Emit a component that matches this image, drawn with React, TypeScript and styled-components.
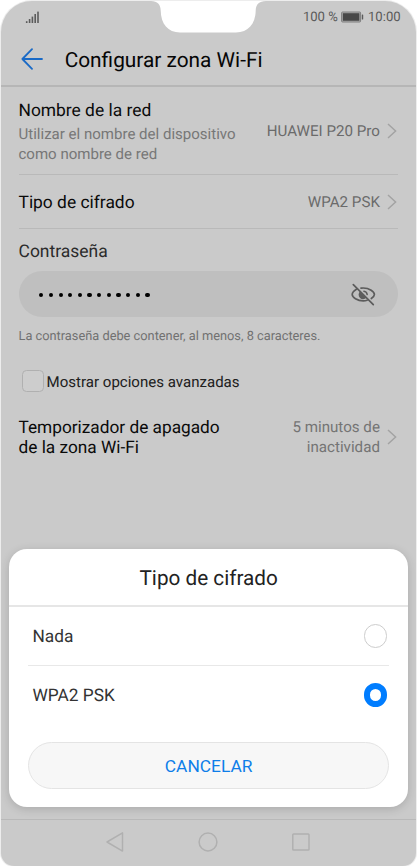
import React, { useState } from "react";
import styled, { createGlobalStyle } from "styled-components";

const GlobalStyle = createGlobalStyle`
  * { box-sizing: border-box; }
  body {
    margin: 0;
    background: #fff;
    font-family: Roboto, sans-serif;
    text-rendering: geometricPrecision;
  }
  button { font-family: inherit; cursor: pointer; }
  svg { display: block; flex: none; }
`;

const Frame = styled.div`
  display: flow-root;
  height: 866px;
  overflow: hidden;
`;

const Phone = styled.div`
  position: relative;
  display: flex;
  flex-direction: column;
  width: 415px;
  height: 865px;
  margin: 1px 1px 0;
  background: #cacaca;
  border-radius: 31px 31px 13px 13px;
  box-shadow: 0 0 0 1px #ededed;
  overflow: hidden;
`;

const Notch = styled.svg`
  position: absolute;
  top: -1px;
  left: 150px;
`;

const StatusBar = styled.div`
  display: flex;
  align-items: center;
  justify-content: space-between;
  height: 32px;
  padding: 0 15.4px 0 24px;
  font-size: 13.1px;
  color: #5a5a5a;
`;

const StatusGroup = styled.div`
  display: flex;
  align-items: center;
  gap: 3.6px;
  white-space: nowrap;
`;

const Header = styled.header`
  display: flex;
  align-items: center;
  height: 54px;
  padding-left: 20px;
  border-bottom: 2px solid #b6b6b6;
`;

const Title = styled.h1`
  margin: 0 0 0 21.7px;
  padding-top: 3px;
  font-size: 20.84px;
  line-height: 24px;
  font-weight: 400;
  color: #060606;
`;

const BackButton = styled.button`
  padding: 0;
  border: 0;
  background: none;
`;

const Content = styled.main`
  flex: 1;
  padding: 0 17.7px 0 17.5px;
`;

const Row = styled.div<{ $height: number; $line?: boolean }>`
  display: flex;
  align-items: center;
  height: ${(p) => p.$height}px;
  padding-right: 1.4px;
  border-bottom: ${(p) => (p.$line ? "1px solid #b9b9b9" : "0")};
`;

const RowText = styled.div`
  flex: 1;
  padding-top: 2px;
  white-space: nowrap;
`;

const Label = styled.div<{ $compact?: boolean }>`
  font-size: ${(p) => (p.$compact ? 17.25 : 17.4)}px;
  line-height: ${(p) => (p.$compact ? 20.3 : 24)}px;
  color: #0a0a0a;
`;

const Sub = styled.div`
  margin-top: 0.6px;
  font-size: 15.04px;
  line-height: 20px;
  color: #777;
`;

const Value = styled.div<{ $soft?: boolean }>`
  padding-top: ${(p) => (p.$soft ? 0 : 1.6)}px;
  margin-right: 7px;
  font-size: 15.15px;
  line-height: 20px;
  text-align: right;
  white-space: nowrap;
  color: ${(p) => (p.$soft ? "#747474" : "#6b6b6b")};
`;

const FieldLabel = styled.div`
  margin: 11px 0 7px;
  font-size: 17.49px;
  line-height: 24px;
  color: #2b2b2b;
`;

const Field = styled.div`
  display: flex;
  align-items: center;
  justify-content: space-between;
  height: 46px;
  padding: 0 22px 0 20.7px;
  border-radius: 23px;
  background: #bfbfbf;
`;

const Dots = styled.div`
  display: flex;
  gap: 5.47px;
  padding-top: 2px;
`;

const Dot = styled.span`
  width: 4.2px;
  height: 4.2px;
  border-radius: 50%;
  background: #000;
`;

const Hint = styled.div`
  margin-top: 12px;
  font-size: 12.81px;
  line-height: 16px;
  color: #717171;
`;

const CheckRow = styled.label`
  display: flex;
  align-items: center;
  gap: 2.5px;
  height: 22px;
  margin: 25px 0 25px 3.2px;
  font-size: 15.06px;
  color: #202020;
`;

const Box = styled.span`
  width: 22.4px;
  height: 22px;
  border: 1.4px solid #b0b0b0;
  border-radius: 4.5px;
  background: #cdcdcd;
`;

const CheckText = styled.span`
  padding-top: 1px;
`;

const NavBar = styled.nav`
  display: flex;
  align-items: center;
  justify-content: center;
  gap: 73px;
  height: 47px;
  padding: 0 2px 2px 0;
  border-top: 1px solid #b9b9b9;
`;

const Dialog = styled.section`
  position: absolute;
  left: 8.3px;
  right: 8px;
  bottom: 59px;
  height: 258.3px;
  background: #fff;
  border-radius: 18px;
  box-shadow: 0 2px 10px rgba(0, 0, 0, 0.16);
`;

const DialogTitle = styled.h2`
  margin: 0;
  padding-top: 2px;
  height: 58.3px;
  border-bottom: 2px solid #e6e6e6;
  font-size: 20.72px;
  line-height: 56px;
  font-weight: 400;
  text-align: center;
  color: #222;
`;

const Option = styled.div<{ $line?: boolean }>`
  display: flex;
  align-items: center;
  justify-content: space-between;
  height: ${(p) => (p.$line ? 59 : 58)}px;
  margin: 0 18.7px;
  padding: 0 2px 0 4.5px;
  border-bottom: ${(p) => (p.$line ? "1px solid #e8e8e8" : "0")};
  font-size: 17.3px;
  color: #333;
`;

const OptionText = styled.span`
  padding-top: 2px;
`;

const Radio = styled.span<{ $on: boolean }>`
  width: 23.4px;
  height: 23.4px;
  border-radius: 50%;
  border: ${(p) => (p.$on ? "6px solid #007dff" : "1px solid #cdcdcd")};
  background: #fff;
`;

const CancelButton = styled.button`
  display: block;
  width: calc(100% - 37.4px);
  height: 47px;
  margin: 18px 18.7px 0;
  padding: 0;
  border: 1px solid #e4e4e4;
  border-radius: 24px;
  background: #f7f7f7;
  color: #0d7ee9;
  font-size: 17.35px;
`;

const Chevron = () => (
  <svg width="10" height="16" viewBox="0 0 10 16" fill="none" stroke="#a3a3a3" strokeWidth="1.5">
    <path d="M1 1 8.6 8 1 15" />
  </svg>
);

const SignalIcon = () => (
  <svg width="14" height="13" viewBox="0 0 14 13" fill="#5c5c5c">
    <rect x="0.9" y="10.2" width="1.6" height="1.8" />
    <rect x="3.8" y="8" width="1.6" height="4" />
    <rect x="6.6" y="5.6" width="1.6" height="6.4" />
    <rect x="9.4" y="3" width="1.6" height="9" />
    <rect x="12.2" y="0.6" width="1.6" height="11.4" />
  </svg>
);

const BatteryIcon = () => (
  <svg width="23" height="12" viewBox="0 0 23 12">
    <rect x="0.6" y="1" width="19" height="10" rx="1" fill="#b0b0b0" stroke="#777" strokeWidth="0.9" />
    <rect x="1.8" y="2.2" width="16.6" height="7.6" fill="#484848" />
    <rect x="20.8" y="3.5" width="1.4" height="5" rx="0.5" fill="#5c5c5c" />
  </svg>
);

const BackIcon = () => (
  <svg width="22" height="22" viewBox="0 0 22 22" fill="none" stroke="#1a6ac6" strokeWidth="1.8" strokeLinecap="round" strokeLinejoin="round">
    <path d="M11 1.2 1.4 11 11 20.8M1.4 11H21" />
  </svg>
);

const EyeOffIcon = () => (
  <svg width="25" height="23" viewBox="0 0 25 23" fill="none" stroke="#5c5c5c" strokeWidth="1.7" strokeLinecap="round">
    <path d="M5.4 6.2C3 7.7 1.2 9.8 1.2 11.5 1.2 14.1 6.2 17.9 12.3 17.9 13.6 17.9 14.9 17.7 16.1 17.3" />
    <path d="M10 5.2C10.8 5.1 11.5 5 12.3 5 18.4 5 23.4 8.900 23.4 11.5 23.4 12.7 22.2 14.2 20.3 15.5" />
    <path d="M8.9 8.5A4.5 4.5 0 1 0 15.4 14.8Z" fill="#5c5c5c" stroke="none" />
    <path d="M12.9 8.3A3.8 3.8 0 0 1 16.2 11.6" strokeWidth="1.5" />
    <path d="M2.3 1.6 22.3 21.6" />
  </svg>
);

const options = ["Nada", "WPA2 PSK"];

export default function App() {
  const [selected, setSelected] = useState("WPA2 PSK");
  return (
    <Frame>
      <GlobalStyle />
      <Phone>
        <Notch width="116" height="34" viewBox="0 0 116 34" fill="#fff">
          <path d="M0 0V1C6.5 1 9.5 4.5 9.7 10.5 9.9 24 17 32.5 29 32.5H85C97 32.5 104.5 24 104.7 10.5 104.9 4.5 108 1 115 1V0Z" />
        </Notch>
        <StatusBar>
          <SignalIcon />
          <StatusGroup>
            <span>100 %</span>
            <BatteryIcon />
            <span>10:00</span>
          </StatusGroup>
        </StatusBar>
        <Header>
          <BackButton aria-label="Atrás"><BackIcon /></BackButton>
          <Title>Configurar zona Wi-Fi</Title>
        </Header>
        <Content>
          <Row $height={88} $line>
            <RowText>
              <Label>Nombre de la red</Label>
              <Sub>Utilizar el nombre del dispositivo<br />como nombre de red</Sub>
            </RowText>
            <Value>HUAWEI P20 Pro</Value>
            <Chevron />
          </Row>
          <Row $height={54} $line>
            <RowText><Label>Tipo de cifrado</Label></RowText>
            <Value>WPA2 PSK</Value>
            <Chevron />
          </Row>
          <FieldLabel>Contraseña</FieldLabel>
          <Field>
            <Dots>{Array.from({ length: 12 }, (_, i) => <Dot key={i} />)}</Dots>
            <EyeOffIcon />
          </Field>
          <Hint>La contraseña debe contener, al menos, 8 caracteres.</Hint>
          <CheckRow>
            <Box />
            <CheckText>Mostrar opciones avanzadas</CheckText>
          </CheckRow>
          <Row $height={40}>
            <RowText><Label $compact>Temporizador de apagado<br />de la zona Wi-Fi</Label></RowText>
            <Value $soft>5 minutos de<br />inactividad</Value>
            <Chevron />
          </Row>
        </Content>
        <NavBar>
          <svg width="20" height="22" viewBox="0 0 20 22" fill="none" stroke="#b0b0b0" strokeWidth="1.5" strokeLinejoin="round">
            <path d="M2 11 17.5 1.9V20.1Z" />
          </svg>
          <svg width="20" height="20" viewBox="0 0 20 20" fill="none" stroke="#b0b0b0" strokeWidth="1.5">
            <circle cx="10" cy="10" r="8.9" />
          </svg>
          <svg width="20" height="20" viewBox="0 0 20 20" fill="none" stroke="#b0b0b0" strokeWidth="1.5">
            <rect x="1.8" y="1.9" width="16.2" height="16.2" rx="0.8" />
          </svg>
        </NavBar>
        <Dialog role="dialog">
          <DialogTitle>Tipo de cifrado</DialogTitle>
          {options.map((name, i) => (
            <Option key={name} $line={i === 0} onClick={() => setSelected(name)}>
              <OptionText>{name}</OptionText>
              <Radio $on={selected === name} />
            </Option>
          ))}
          <CancelButton>CANCELAR</CancelButton>
        </Dialog>
      </Phone>
    </Frame>
  );
}
